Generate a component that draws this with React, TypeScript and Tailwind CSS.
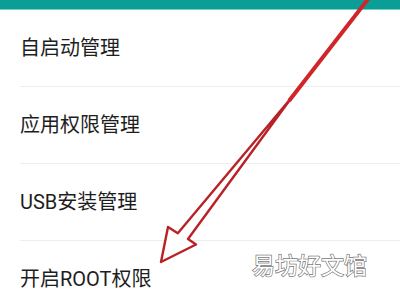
const items = ["自启动管理", "应用权限管理", "USB安装管理", "开启ROOT权限"];

const Arrow = () => (
  <svg
    className="absolute inset-0 pointer-events-none"
    width="400"
    height="300"
    viewBox="0 0 400 300"
  >
    <polygon
      points="292,97 188,239 196,244.5 161,262 168,227 177.8,233.2"
      fill="#ffffff"
      stroke="#b82226"
      strokeWidth="2.4"
      strokeLinejoin="round"
    />
    <line x1="372" y1="-6" x2="289.7" y2="100" stroke="#d0262a" strokeWidth="4" strokeLinecap="round" />
  </svg>
);

const App = () => {
  return (
    <div className="relative w-[400px] h-[300px] overflow-hidden bg-white font-['Roboto','Noto_Sans_CJK_SC',sans-serif]">
      <div className="h-[10px] bg-[#0a9e97] border-b border-[#74d2cd]"></div>
      {items.map((label) => (
        <div key={label} className="h-[77px] pl-5">
          <div className="h-full flex items-center border-b border-[#eeeeee]">
            <span className="text-[20px] leading-none text-[#1e1e1e]">{label}</span>
          </div>
        </div>
      ))}
      <Arrow />
      <div className="absolute left-[252px] top-[253px] text-[23px] leading-none text-white font-['Noto_Sans_CJK_SC',sans-serif] [-webkit-text-stroke:1.4px_#777777] [paint-order:stroke_fill]">
        易坊好文馆
      </div>
    </div>
  );
};

export default App;
